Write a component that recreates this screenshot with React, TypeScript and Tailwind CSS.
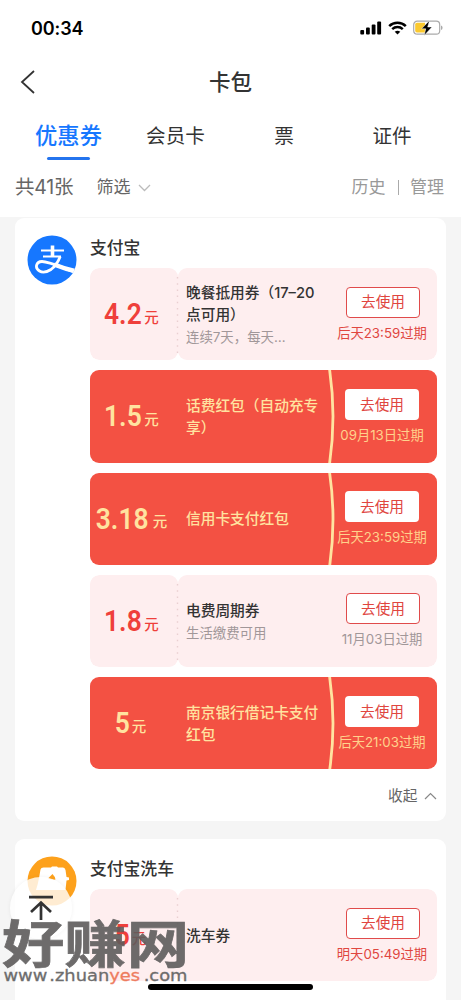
import React from 'react';

type Coupon = {
  amount: string;
  title: string;
  note?: string;
  expiry: string;
  red?: boolean;
  urgent?: boolean;
};

const coupons: Coupon[] = [
  { amount: '4.2', title: '晚餐抵用券（17–20点可用）', note: '连续7天，每天…', expiry: '后天23:59过期', urgent: true },
  { amount: '1.5', title: '话费红包（自动充专享）', expiry: '09月13日过期', red: true },
  { amount: '3.18', title: '信用卡支付红包', expiry: '后天23:59过期', red: true },
  { amount: '1.8', title: '电费周期券', note: '生活缴费可用', expiry: '11月03日过期' },
  { amount: '5', title: '南京银行借记卡支付红包', expiry: '后天21:03过期', red: true },
];

const washCoupon: Coupon = { amount: '5', title: '洗车券', expiry: '明天05:49过期', urgent: true };

function CouponRow({ c }: { c: Coupon }) {
  const tone = c.red ? 'text-[#ffe3a0]' : 'text-[#ef3f3b]';
  const half = c.red ? '' : 'bg-[#feeeef] rounded-[9px]';
  return (
    <div className={`relative flex h-[92.3px] w-[346.5px] shrink-0 overflow-hidden rounded-[9px] ${c.red ? 'bg-[#f35143]' : ''}`}>
      <div className={`flex w-[87.5px] shrink-0 items-center justify-center pr-[7px] ${half} ${tone}`}>
        <div className="flex items-end whitespace-nowrap">
          <span className="origin-center scale-x-[0.91] font-[Roboto] text-[29px] leading-[34px] font-semibold tracking-[0.1px]">{c.amount}</span>
          <span className="mb-[3.5px] ml-[1px] text-[14.5px] leading-[20px] font-medium">元</span>
        </div>
      </div>
      <div className={`flex min-w-0 flex-1 ${half}`}>
        <div className="flex w-[150px] shrink-0 flex-col justify-center pt-[3px] pl-[8.5px]">
          <div className={`w-[141px] text-[14.7px] leading-[21.5px] font-medium ${c.red ? 'text-[#ffe3a0]' : 'text-[#333]'}`}>{c.title}</div>
          {c.note && <div className="text-[13.4px] leading-[22px] text-[#a19799]">{c.note}</div>}
        </div>
        <div className="flex w-[109px] flex-col items-center pt-[18.5px]">
          <div className={`flex h-[31px] w-[74.5px] items-center justify-center rounded-[4px] bg-white text-[14.7px] ${c.red ? 'text-[#e0463f]' : 'ml-[2px] border-[1.4px] border-[#e04b4b] text-[#e0463f]'}`}>
            <span className="pt-px">去使用</span>
          </div>
          <div className={`mt-[5px] text-[13.3px] leading-[20px] whitespace-nowrap ${c.red ? 'text-[#ffd28c]' : c.urgent ? 'text-[#e0463f]' : 'text-[#a19799]'}`}>{c.expiry}</div>
        </div>
      </div>
      {c.red ? (
        <svg className="absolute top-0 left-[236px]" width="12" height="93" viewBox="0 0 12 93" fill="none">
          <path d="M3.5 -1Q10.5 46 3.5 94" stroke="#ffe3a0" strokeWidth="2.8" />
        </svg>
      ) : (
        <svg className="absolute top-0 left-[86px]" width="3" height="93" viewBox="0 0 3 93">
          <path d="M1.5 9V85" stroke="#eacfd1" strokeWidth="1.4" strokeDasharray="1.5 4.7" />
        </svg>
      )}
    </div>
  );
}

function StatusBar() {
  return (
    <div className="flex h-[56px] items-center justify-between pr-[18px] pl-[31px]">
      <span className="pt-px text-[18px] font-semibold tracking-[-0.1px] text-black">00:34</span>
      <div className="flex items-center gap-[6px]">
        <svg width="22" height="14" viewBox="0 0 22 14" fill="#000">
          <rect x="0.3" y="9" width="3.8" height="4.5" rx="1" />
          <rect x="6" y="6.6" width="3.8" height="6.9" rx="1" />
          <rect x="11.7" y="3.6" width="3.8" height="9.9" rx="1" />
          <rect x="17.2" y="0.6" width="3.9" height="12.9" rx="1" />
        </svg>
        <svg width="19" height="14" viewBox="0 0 19 14" fill="none" stroke="#000">
          <path d="M1.2 5.1C5.8.6 13.2.6 17.8 5.1" strokeWidth="2.5" />
          <path d="M4.2 8.1C7.2 5.3 11.8 5.3 14.8 8.1" strokeWidth="2.4" />
          <path d="M9.5 13.6L6.7 10.8Q9.5 8.5 12.3 10.8Z" fill="#000" stroke="none" />
        </svg>
        <svg width="30" height="16" viewBox="0 0 30 16">
          <rect x="0.7" y="1.2" width="26" height="13" rx="3.5" fill="#fff" stroke="#aaa" strokeWidth="1.2" />
          <path d="M4 2.8H12V12.6H4Q2.2 12.6 2.2 10.8V4.6Q2.2 2.8 4 2.8Z" fill="#fbc92f" />
          <path d="M28 5.5Q29.6 6 29.6 7.7T28 10Z" fill="#aaa" />
          <path d="M16.5 0.5L8.5 8.8H12.7L11.2 15.5L19 7H14.7Z" fill="#000" stroke="#fff" strokeWidth="0.5" />
        </svg>
      </div>
    </div>
  );
}

export default function App() {
  return (
    <div className="relative flex h-[1000px] w-[461px] flex-col overflow-hidden bg-[#f5f5f5] font-[Inter,'Noto_Sans_CJK_SC',sans-serif] text-[#333]">
      <header className="h-[217px] shrink-0 bg-white">
        <StatusBar />
        <div className="grid h-[51px] grid-cols-3 items-center">
          <svg className="ml-[19px]" width="17" height="26" viewBox="0 0 17 26" fill="none" stroke="#333" strokeWidth="1.8">
            <path d="M15 2L3 13L15 24" />
          </svg>
          <h1 className="text-center text-[21.5px] leading-[30px] font-medium">卡包</h1>
        </div>
        <nav className="flex h-[53px] text-[19.6px]">
          <div className="flex w-[137px] flex-col items-center text-[22.3px] font-medium text-[#1677ff]">
            <span className="mt-[13px] leading-[32px]">优惠券</span>
            <span className="mt-[5px] h-[2.5px] w-[43px] shrink-0 rounded-full bg-[#2474ee]" />
          </div>
          <div className="w-[77px] pt-[14px] text-center leading-[30px]">会员卡</div>
          <div className="w-[140px] pt-[14px] text-center leading-[30px]">票</div>
          <div className="w-[76px] pt-[14px] text-center leading-[30px]">证件</div>
        </nav>
        <div className="flex h-[55px] items-center pr-[17px] pl-[15px] text-[17px] text-[#666]">
          <span className="w-[59px] text-[19.5px] tracking-[-0.2px] whitespace-nowrap">共41张</span>
          <span className="ml-[22.5px] pt-px">筛选</span>
          <svg className="ml-[7px]" width="13" height="8" viewBox="0 0 13 8" fill="none" stroke="#bbb" strokeWidth="1.3"><path d="M1 1L6.5 6.5L12 1" /></svg>
          <span className="ml-auto pt-px text-[#999]">历史</span>
          <span className="mr-[11px] ml-[12.5px] h-[15px] w-px bg-[#aaa]" />
          <span className="pt-px text-[#999]">管理</span>
        </div>
      </header>

      <main className="flex flex-col gap-[18px] px-[15px] pt-px">
        <section className="flex h-[603px] shrink-0 gap-[13px] rounded-[9px] bg-white pl-[12px]">
          <svg className="mt-[16.5px] shrink-0" width="50" height="50" viewBox="0 0 50 50">
            <defs><clipPath id="pay"><circle cx="25" cy="25" r="24.5" /></clipPath></defs>
            <circle cx="25" cy="25" r="24.5" fill="#1677ff" />
            <g clipPath="url(#pay)" fill="none" stroke="#fff">
              <path d="M14 15.5H37" strokeWidth="2" />
              <path d="M25.5 10.5V22" strokeWidth="3.6" />
              <path d="M16 21.5H34" strokeWidth="2" />
              <path d="M33.2 21.5Q30 30 24 34.5Q17 39 12.5 36C7.5 33 9 26.5 15 26.5C22 26.5 31 31 50 38" strokeWidth="2.8" />
              <path d="M27 29.5Q38 34 50 36.5" strokeWidth="4.5" />
            </g>
          </svg>
          <div className="flex flex-col">
            <h2 className="h-[50px] pt-[18px] text-[16.8px] leading-[24px] font-medium">支付宝</h2>
            <div className="flex flex-col gap-[10px]">
              {coupons.map((c) => <CouponRow key={c.title} c={c} />)}
            </div>
            <div className="mt-[14.5px] flex items-center justify-end gap-[6px] text-[14.7px] leading-[24px] text-[#666]">
              收起
              <svg width="13" height="8" viewBox="0 0 13 8" fill="none" stroke="#888" strokeWidth="1.2"><path d="M1 7L6.5 1.5L12 7" /></svg>
            </div>
          </div>
        </section>
        <section className="flex h-[180px] shrink-0 gap-[13px] rounded-[9px] bg-white pl-[12px]">
          <svg className="mt-[16.5px] shrink-0" width="50" height="50" viewBox="0 0 50 50">
            <circle cx="25" cy="25" r="24.5" fill="#fda11c" />
            <path d="M13.5 13.5Q14 11.5 16.500 11.500H24L25 10.500H30L31 11.500H36Q38 11.500 38.500 14L39.500 21L42 21.500V24L39.500 24.500L38.500 34H9Q11 28 12 22Z" fill="#fff" />
            <path d="M21 22.500Q23 20.500 25.500 18Q28 20.500 28.500 23.500Q25 24 21 22.500Z" fill="#fda11c" />
          </svg>
          <div className="flex flex-col">
            <h2 className="h-[50px] pt-[18px] text-[16.8px] leading-[24px] font-medium">支付宝洗车</h2>
            <CouponRow c={washCoupon} />
          </div>
        </section>
      </main>

      <div className="absolute top-[877px] left-[10px] flex h-[62px] w-[62px] justify-center rounded-full bg-white/80 pt-[18px] shadow-[0_0_4px_rgba(0,0,0,0.06)]">
        <svg width="26" height="26" viewBox="0 0 26 26" fill="none" stroke="#333" strokeWidth="2.7">
          <path d="M1 2.2H25M13 25V8M3 17L13 7.5L23 17" />
        </svg>
      </div>

      <div className="absolute top-[984px] left-[148px] h-[6px] w-[165px] rounded-full bg-black" />

      <svg className="absolute top-[915px] left-0 opacity-90" width="200" height="75" viewBox="0 0 200 75">
        <g transform="translate(2 47.5) scale(1 0.86)">
          <text x="0" y="0" textLength="187" lengthAdjust="spacingAndGlyphs" fontFamily="Noto Sans CJK SC" fontWeight="700" fontSize="60" fill="#5e5c5c" stroke="#5e5c5c" strokeWidth="0.8">好赚网</text>
        </g>
        <text x="3.5" y="66" textLength="184" lengthAdjust="spacingAndGlyphs" fontFamily="DejaVu Sans" fontSize="15" fill="#5e5e5e" stroke="#5e5e5e" strokeWidth="0.3">www<tspan dx="3">.</tspan>zhuan<tspan fill="#ed704f" stroke="#ed704f">yes</tspan><tspan dx="3">.</tspan>com</text>
      </svg>
    </div>
  );
}
